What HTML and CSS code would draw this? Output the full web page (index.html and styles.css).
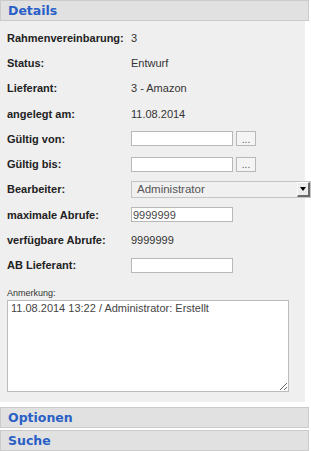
FILE: index.html
```html
<!DOCTYPE html>
<html lang="de">
<head>
	<meta charset="UTF-8">
	<title>Rahmenvereinbarung</title>
	<link rel="stylesheet" href="styles.css">
</head>
<body>
<div class="accordion">
	<div class="acc-head">Details</div>
	<div class="acc-body">
		<div class="form">
			<label>Rahmenvereinbarung:</label><span class="val">3</span>
			<label>Status:</label><span class="val">Entwurf</span>
			<label>Lieferant:</label><span class="val">3 - Amazon</span>
			<label>angelegt am:</label><span class="val">11.08.2014</span>
			<label>Gültig von:</label>
			<div class="field"><input type="text" class="txt"><button type="button" class="dots">...</button></div>
			<label>Gültig bis:</label>
			<div class="field"><input type="text" class="txt"><button type="button" class="dots">...</button></div>
			<label>Bearbeiter:</label>
			<div class="field">
				<div class="combo">
					<span class="combo-text">Administrator</span>
					<span class="combo-btn"><i></i></span>
				</div>
			</div>
			<label>maximale Abrufe:</label>
			<div class="field"><input type="text" class="txt" value="9999999"></div>
			<label>verfügbare Abrufe:</label><span class="val">9999999</span>
			<label>AB Lieferant:</label>
			<div class="field"><input type="text" class="txt"></div>
		</div>
		<div class="note">
			<div class="note-label">Anmerkung:</div>
			<textarea class="note-text">11.08.2014 13:22 / Administrator: Erstellt</textarea>
		</div>
	</div>
	<div class="acc-head closed">Optionen</div>
	<div class="acc-head closed">Suche</div>
</div>
</body>
</html>
```
FILE: styles.css
```css
body {
	margin: 0;
	background: #fff;
	font: 11px "Liberation Sans", Arial, sans-serif;
	color: #333;
}
.accordion {
	width: 309px;
}
.acc-head {
	box-sizing: border-box;
	height: 21px;
	padding: 2px 0 0 7px;
	background: #e1e1e1;
	border: 1px solid #cbcbcb;
	color: #2a5fc6;
	font: bold 12.5px "DejaVu Sans", Verdana, sans-serif;
	line-height: 16px;
}
.acc-head.closed {
	margin-bottom: 2px;
}
.acc-body {
	width: 305px;
	box-sizing: border-box;
	background: #efefef;
	padding: 4px 0 10px 7px;
	margin-bottom: 5px;
}
.form {
	display: grid;
	grid-template-columns: 124px 1fr;
	grid-auto-rows: 25.3px;
	align-items: center;
}
.form label {
	font-weight: bold;
	color: #222;
}
.val {
	color: #333;
}
.field {
	display: flex;
	align-items: center;
	gap: 3px;
}
.txt {
	box-sizing: border-box;
	width: 102px;
	height: 15px;
	margin: 0;
	padding: 0 1px;
	border: 1px solid #b8b8b8;
	background: #fff;
	font: 11px "Liberation Sans", Arial, sans-serif;
	color: #444;
	outline: none;
}
.dots {
	box-sizing: border-box;
	width: 20px;
	height: 15px;
	margin: 0;
	padding: 2px 0 0;
	border: 1px solid #b8b8b8;
	background: #f4f4f4;
	color: #555;
	font: 10px "Liberation Sans", Arial, sans-serif;
	line-height: 8px;
}
.combo {
	box-sizing: border-box;
	display: flex;
	width: 180px;
	height: 17px;
	border: 1px solid #c4c4c4;
	background: #f0f0f0;
}
.combo-text {
	flex: 1;
	padding: 1px 0 0 5px;
	font: 11.5px "Liberation Sans", Arial, sans-serif;
	color: #555;
	line-height: 13px;
}
.combo-btn {
	box-sizing: border-box;
	width: 13px;
	height: 15px;
	background: #ececec;
	border-top: 1px solid #fff;
	border-left: 1px solid #fff;
	border-right: 2px solid #6a6a6a;
	border-bottom: 2px solid #6a6a6a;
	display: flex;
	align-items: center;
	justify-content: center;
}
.combo-btn i {
	width: 0;
	height: 0;
	border-left: 3px solid transparent;
	border-right: 3px solid transparent;
	border-top: 4px solid #000;
}
.note {
	margin-top: 10px;
}
.note-label {
	font-size: 9px;
	line-height: 10px;
	color: #333;
	margin-bottom: 2px;
}
.note-text {
	box-sizing: border-box;
	display: block;
	width: 282px;
	height: 92px;
	margin: 0;
	padding: 1px 3px;
	border: 1px solid #bbb;
	background: #fff;
	font: 11px "Liberation Sans", Arial, sans-serif;
	color: #444;
	resize: both;
	outline: none;
}
```
